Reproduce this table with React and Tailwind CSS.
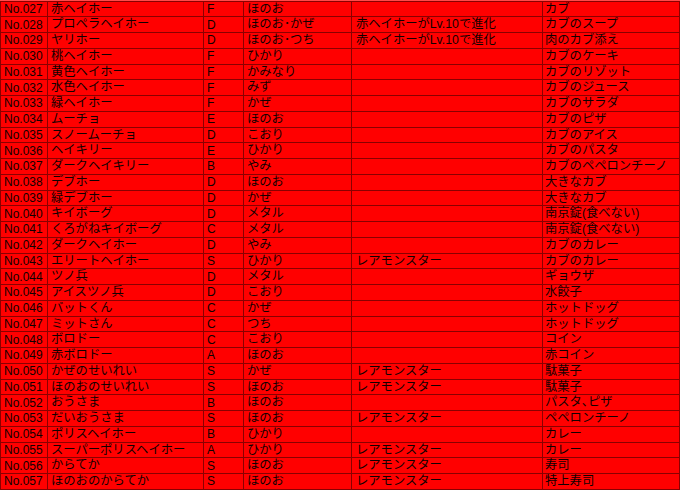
const rows = [
  ['No.027', '赤ヘイホー', 'F', 'ほのお', '', 'カブ'],
  ['No.028', 'プロペラヘイホー', 'D', 'ほのお･かぜ', '赤ヘイホーがLv.10で進化', 'カブのスープ'],
  ['No.029', 'ヤリホー', 'D', 'ほのお･つち', '赤ヘイホーがLv.10で進化', '肉のカブ添え'],
  ['No.030', '桃ヘイホー', 'F', 'ひかり', '', 'カブのケーキ'],
  ['No.031', '黄色ヘイホー', 'F', 'かみなり', '', 'カブのリゾット'],
  ['No.032', '水色ヘイホー', 'F', 'みず', '', 'カブのジュース'],
  ['No.033', '緑ヘイホー', 'F', 'かぜ', '', 'カブのサラダ'],
  ['No.034', 'ムーチョ', 'E', 'ほのお', '', 'カブのピザ'],
  ['No.035', 'スノームーチョ', 'D', 'こおり', '', 'カブのアイス'],
  ['No.036', 'ヘイキリー', 'E', 'ひかり', '', 'カブのパスタ'],
  ['No.037', 'ダークヘイキリー', 'B', 'やみ', '', 'カブのペペロンチーノ'],
  ['No.038', 'デブホー', 'D', 'ほのお', '', '大きなカブ'],
  ['No.039', '緑デブホー', 'D', 'かぜ', '', '大きなカブ'],
  ['No.040', 'キイボーグ', 'D', 'メタル', '', '南京錠(食べない)'],
  ['No.041', 'くろがねキイボーグ', 'C', 'メタル', '', '南京錠(食べない)'],
  ['No.042', 'ダークヘイホー', 'D', 'やみ', '', 'カブのカレー'],
  ['No.043', 'エリートヘイホー', 'S', 'ひかり', 'レアモンスター', 'カブのカレー'],
  ['No.044', 'ツノ兵', 'D', 'メタル', '', 'ギョウザ'],
  ['No.045', 'アイスツノ兵', 'D', 'こおり', '', '水餃子'],
  ['No.046', 'バットくん', 'C', 'かぜ', '', 'ホットドッグ'],
  ['No.047', 'ミットさん', 'C', 'つち', '', 'ホットドッグ'],
  ['No.048', 'ボロドー', 'C', 'こおり', '', 'コイン'],
  ['No.049', '赤ボロドー', 'A', 'ほのお', '', '赤コイン'],
  ['No.050', 'かぜのせいれい', 'S', 'かぜ', 'レアモンスター', '駄菓子'],
  ['No.051', 'ほのおのせいれい', 'S', 'ほのお', 'レアモンスター', '駄菓子'],
  ['No.052', 'おうさま', 'B', 'ほのお', '', 'パスタ､ピザ'],
  ['No.053', 'だいおうさま', 'S', 'ほのお', 'レアモンスター', 'ペペロンチーノ'],
  ['No.054', 'ポリスヘイホー', 'B', 'ひかり', '', 'カレー'],
  ['No.055', 'スーパーポリスヘイホー', 'A', 'ひかり', 'レアモンスター', 'カレー'],
  ['No.056', 'からてか', 'S', 'ほのお', 'レアモンスター', '寿司'],
  ['No.057', 'ほのおのからてか', 'S', 'ほのお', 'レアモンスター', '特上寿司'],
];

// per-column padding and size (Japanese columns a touch larger)
const cells = [
  'pl-[3px] text-[12px]',
  'pl-[3px] text-[12.3px]',
  'pl-[3px] text-[12px]',
  'pl-[3px] text-[12.3px]',
  'pl-[4px] text-[12.3px]',
  'pl-[2px] text-[12.3px]',
];

export default function App() {
  return (
    <div
      className="w-[680px] h-[490px] overflow-hidden bg-[#ff0000] text-[#100000]"
      style={{ fontFamily: '"Liberation Sans", "Noto Sans CJK JP", sans-serif' }}
    >
      <div className="h-[1.5px] bg-[#ff4a4a] border-b border-[#8a0000]" />
      {rows.map((r) => (
        <div
          key={r[0]}
          className="grid grid-cols-[47px_156px_40px_108px_191px_1fr] h-[15.76px] border-b border-l border-[#8a0000]"
        >
          {r.map((c, i) => (
            <div
              key={i}
              className={`flex items-center whitespace-nowrap overflow-hidden leading-none border-r border-[#8a0000] ${cells[i]}`}
            >
              {c}
            </div>
          ))}
        </div>
      ))}
    </div>
  );
}
